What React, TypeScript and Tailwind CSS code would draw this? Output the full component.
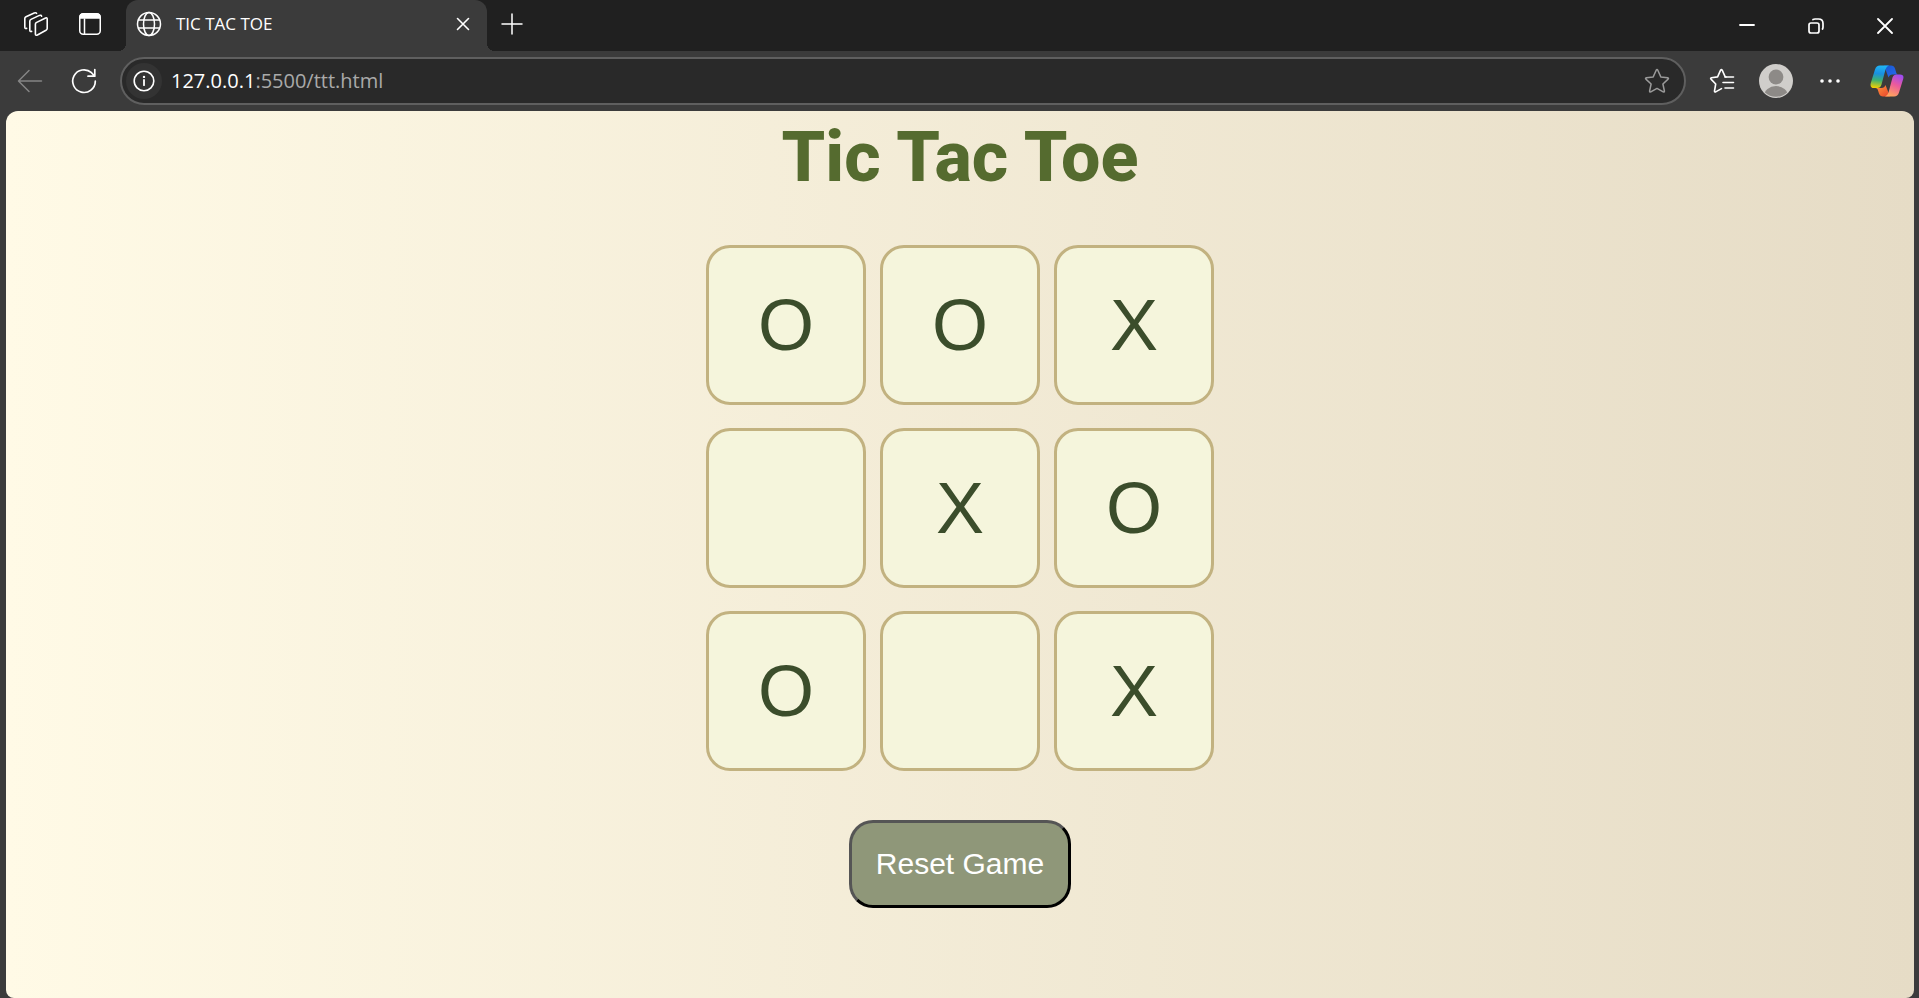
import { useState } from "react";

type Mark = "O" | "X" | "";

const START: Mark[] = ["O", "O", "X", "", "X", "O", "O", "", "X"];

const stroke = {
  fill: "none",
  stroke: "currentColor",
  strokeLinecap: "round" as const,
  strokeLinejoin: "round" as const,
};

function WorkspacesIcon() {
  return (
    <svg width="26" height="26" viewBox="0 0 26 26" {...stroke} strokeWidth="1.6">
      <path d="M13.200 11.600 22.600 7q1.600-.6 1.600 1v9.600q0 1-1.200 1.700l-8.600 4.700q-2 .8-2-1V13.200q0-1 .8-1.600z" />
      <path d="M8.600 20.400q-1.800.4-1.800-1.200V10.200q0-1.200 1.200-1.800l8.400-4q1.800-.6 2.200.8" />
      <path d="M3.600 17.400Q1.800 17.800 1.800 16.200V7.600Q1.800 6.400 3 5.800L11.200 2Q13 1.300 13.600 2.400" />
    </svg>
  );
}

function TabActionsIcon() {
  return (
    <svg width="24" height="24" viewBox="0 0 24 24" {...stroke} strokeWidth="1.5">
      <rect x="1.750" y="1.750" width="20.500" height="20.500" rx="3.500" />
      <path d="M2 6V5q0-3 3-3h14q3 0 3 3v1z" fill="currentColor" />
      <path d="M6.500 7v15" />
    </svg>
  );
}

function GlobeIcon() {
  return (
    <svg width="26" height="26" viewBox="0 0 26 26" {...stroke} strokeWidth="1.5">
      <circle cx="13" cy="13" r="11.500" />
      <ellipse cx="13" cy="13" rx="5.500" ry="11.500" />
      <path d="M2.500 9h21M2.500 17h21" />
    </svg>
  );
}

function CloseIcon() {
  return (
    <svg width="14" height="14" viewBox="0 0 14 14" {...stroke} strokeWidth="1.6">
      <path d="m1.500 1.500 11 11m0-11-11 11" />
    </svg>
  );
}

function PlusIcon() {
  return (
    <svg width="22" height="22" viewBox="0 0 22 22" {...stroke} strokeWidth="1.500">
      <path d="M11 1v20M1 11h20" />
    </svg>
  );
}

function BackIcon() {
  return (
    <svg width="26" height="26" viewBox="0 0 26 26" {...stroke} strokeWidth="1.500">
      <path d="M24.500 13H2M12 2.500 1.500 13 12 23.500" />
    </svg>
  );
}

function ReloadIcon() {
  return (
    <svg width="26" height="26" viewBox="0 0 26 26" {...stroke} strokeWidth="1.700">
      <path d="M24.300 13.200A11.300 11.300 0 1 1 20.500 4.700L23.500 8M23.800 1.500V8.200H17" />
    </svg>
  );
}

function InfoIcon() {
  return (
    <svg width="22" height="22" viewBox="0 0 22 22" {...stroke} strokeWidth="1.600">
      <circle cx="11" cy="11" r="9.800" />
      <path d="M11 10v5.200" strokeWidth="1.800" />
      <circle cx="11" cy="6.900" r="1.200" fill="currentColor" stroke="none" />
    </svg>
  );
}

function StarIcon() {
  return (
    <svg width="26" height="26" viewBox="0 0 26 26" {...stroke} strokeWidth="1.500">
      <path d="M12.200 2.200q.8-1.200 1.600 0l3 6.700 6.900.8q1.300.3.4 1.400l-5.200 4.900 1.500 7q.1 1.300-1.200.9L13 20.400l-6.200 3.500q-1.300.4-1.200-.9l1.500-7-5.200-4.900q-.9-1.100.4-1.400l6.900-.8z" />
    </svg>
  );
}

function FavoritesIcon() {
  return (
    <svg width="26" height="26" viewBox="0 0 26 26" {...stroke} strokeWidth="1.600">
      <path d="M17 9l-.8-.2-3-6.600q-.8-1.200-1.600 0l-3 6.700-6.200.8q-1.300.3-.4 1.400l4.700 4.900-1.200 7q0 1.300 1.200.9l5.800-3.300" />
      <path d="M16 9h8.500M14 14.500h10.500M16 20h8.500" />
    </svg>
  );
}

function ProfileIcon() {
  return (
    <svg width="34" height="34" viewBox="0 0 34 34">
      <defs>
        <clipPath id="profile-clip">
          <circle cx="17" cy="17" r="15.800" />
        </clipPath>
      </defs>
      <circle cx="17" cy="17" r="17" fill="#d0cecb" />
      <g clipPath="url(#profile-clip)" fill="#8d8a87">
        <circle cx="17" cy="13" r="7.400" />
        <ellipse cx="17" cy="32" rx="12" ry="10" />
      </g>
    </svg>
  );
}

function MoreIcon() {
  return (
    <svg width="20" height="6" viewBox="0 0 20 6" fill="currentColor">
      <circle cx="2" cy="3" r="1.800" />
      <circle cx="10" cy="3" r="1.800" />
      <circle cx="18" cy="3" r="1.800" />
    </svg>
  );
}

function CopilotIcon() {
  return (
    <svg width="34" height="32" viewBox="0 0 34 32">
      <defs>
        <linearGradient id="cp-left" x1="0.400" y1="0" x2="0.300" y2="1">
          <stop offset="0" stopColor="#1fb4f5" />
          <stop offset="0.350" stopColor="#1a8fe0" />
          <stop offset="0.650" stopColor="#3fb171" />
          <stop offset="1" stopColor="#f5d000" />
        </linearGradient>
        <linearGradient id="cp-right" x1="0.700" y1="0" x2="0.300" y2="1">
          <stop offset="0" stopColor="#a04cf0" />
          <stop offset="0.450" stopColor="#ec5a9c" />
          <stop offset="1" stopColor="#ffa75c" />
        </linearGradient>
        <linearGradient id="cp-top" x1="0" y1="0" x2="1" y2="1">
          <stop offset="0" stopColor="#1657d0" />
          <stop offset="1" stopColor="#2b6cf0" />
        </linearGradient>
        <linearGradient id="cp-bottom" x1="0" y1="0" x2="1" y2="1">
          <stop offset="0" stopColor="#ff9a3c" />
          <stop offset="1" stopColor="#e8402c" />
        </linearGradient>
      </defs>
      <path d="M14 .6h7q3 0 4 3l1.300 4.400q.5 1.500 2.200 1.500h-6q-3 0-4 3z" fill="url(#cp-top)" />
      <path d="M20 31.400h-7q-3 0-4-3l-1.300-3.900Q7.200 23 5.500 23h6q3 0 4-3z" fill="url(#cp-bottom)" />
      <path d="M10 .6h9q-2.500.6-3.500 3.900l-4 15q-1 3.500-4.300 3.500H4Q-.4 23 .8 18L5 4.500Q6.200.6 10 .6z" fill="url(#cp-left)" />
      <path d="M24 31.400h-9q2.500-.6 3.500-3.900l4-15Q23.500 9.400 26.800 9.400H30q4.400 0 3.200 4.600L29 27.500q-1.200 3.900-5 3.900z" fill="url(#cp-right)" />
    </svg>
  );
}

function TabBar() {
  return (
    <header className="flex h-[51px] items-stretch bg-[#202020] text-white">
      <div className="flex w-[126px] items-center pb-1 pl-[23px]">
        <button aria-label="Workspaces" className="mr-[29px]">
          <WorkspacesIcon />
        </button>
        <button aria-label="Tab actions">
          <TabActionsIcon />
        </button>
      </div>
      <div className="relative flex w-[361px] items-center rounded-t-xl bg-[#3b3b3b] pb-1 pl-[10px] pr-[17px]">
        <span className="absolute bottom-0 -left-2 size-2 bg-[radial-gradient(circle_at_0_0,#202020_8px,#3b3b3b_8px)]" />
        <span className="absolute bottom-0 -right-2 size-2 bg-[radial-gradient(circle_at_100%_0,#202020_8px,#3b3b3b_8px)]" />
        <GlobeIcon />
        <span className="ml-[14px] grow text-[17px] leading-6">TIC TAC TOE</span>
        <button aria-label="Close tab">
          <CloseIcon />
        </button>
      </div>
      <button aria-label="New tab" className="ml-[14px] pb-1">
        <PlusIcon />
      </button>
      <div className="ml-auto flex items-center gap-[53px] pr-[26px]">
        <button aria-label="Minimize">
          <svg width="16" height="16" viewBox="0 0 16 16" {...stroke} strokeWidth="1.800">
            <path d="M1 7h14" />
          </svg>
        </button>
        <button aria-label="Restore">
          <svg width="16" height="16" viewBox="0 0 16 16" {...stroke} strokeWidth="1.700">
            <rect x="1" y="5" width="10" height="10" rx="2" />
            <path d="M5 1.500Q6 1 7 1h3.500Q15 1 15 5.500V9q0 1-.500 2" />
          </svg>
        </button>
        <button aria-label="Close">
          <svg width="16" height="16" viewBox="0 0 16 16" {...stroke} strokeWidth="1.800">
            <path d="m1 1 14 14M15 1 1 15" />
          </svg>
        </button>
      </div>
    </header>
  );
}

function Toolbar() {
  return (
    <nav className="flex h-[60px] items-center pl-[17px] pr-[15px] text-white">
      <button aria-label="Back" className="mr-[28px] text-[#858585]">
        <BackIcon />
      </button>
      <button aria-label="Reload" className="mr-[23px]">
        <ReloadIcon />
      </button>
      <div className="flex h-12 grow items-center rounded-full border-2 border-[#5f5f5f] bg-[#292929] pl-1 pr-[14px]">
        <button
          aria-label="Site information"
          className="flex size-9 items-center justify-center rounded-full bg-[#333333]"
        >
          <InfoIcon />
        </button>
        <div className="relative ml-[9px] grow text-[20px] leading-7">
          <input
            aria-label="Address"
            defaultValue="127.0.0.1:5500/ttt.html"
            className="w-full bg-transparent text-transparent outline-none"
          />
          <span aria-hidden="true" className="pointer-events-none absolute inset-0 text-[#a9a9a9]">
            <span className="text-white">127.0.0.1</span>:5500/ttt.html
          </span>
        </div>
        <button aria-label="Add to favorites" className="text-[#9a9a9a]">
          <StarIcon />
        </button>
      </div>
      <button aria-label="Favorites" className="ml-[23px]">
        <FavoritesIcon />
      </button>
      <button aria-label="Profile" className="ml-6">
        <ProfileIcon />
      </button>
      <button aria-label="Settings and more" className="ml-[27px]">
        <MoreIcon />
      </button>
      <button aria-label="Copilot" className="ml-[30px]">
        <CopilotIcon />
      </button>
    </nav>
  );
}

export default function App() {
  const [cells, setCells] = useState<Mark[]>(START);
  const [turn, setTurn] = useState<"O" | "X">("O");

  const play = (index: number) => {
    if (cells[index]) return;
    setCells(cells.map((cell, i) => (i === index ? turn : cell)));
    setTurn(turn === "O" ? "X" : "O");
  };

  const reset = () => {
    setCells(START.map(() => ""));
    setTurn("O");
  };

  return (
    <div className="flex min-h-screen flex-col bg-[#3b3b3b] font-['Open_Sans','Noto_Sans',sans-serif]">
      <TabBar />
      <Toolbar />
      <main className="mr-[5px] ml-[6px] flex grow flex-col items-center rounded-t-xl rounded-b-lg bg-[linear-gradient(to_right,#fffae6,#e6dcc6)] font-['Liberation_Sans',Arial,sans-serif]">
        <h1 className="mt-[6px] font-[Roboto,sans-serif] text-[70px] leading-[80px] font-extrabold text-[#556b2f]">
          Tic Tac Toe
        </h1>
        <div className="mt-[48px] grid grid-cols-3 gap-x-[14px] gap-y-[23px]">
          {cells.map((cell, index) => (
            <button
              key={index}
              onClick={() => play(index)}
              aria-label={`Cell ${index + 1}`}
              className="flex size-40 items-center justify-center rounded-3xl border-3 border-[#c2b280] bg-[#f5f5dc] text-[72px] leading-none text-[#3b4d2b]"
            >
              {cell}
            </button>
          ))}
        </div>
        <button
          onClick={reset}
          className="mt-[49px] rounded-3xl border-3 border-t-[#555555] border-r-black border-b-black border-l-[#555555] bg-[#8f9779] px-6 py-6 text-[30px] leading-[34px] text-white"
        >
          Reset Game
        </button>
      </main>
    </div>
  );
}
